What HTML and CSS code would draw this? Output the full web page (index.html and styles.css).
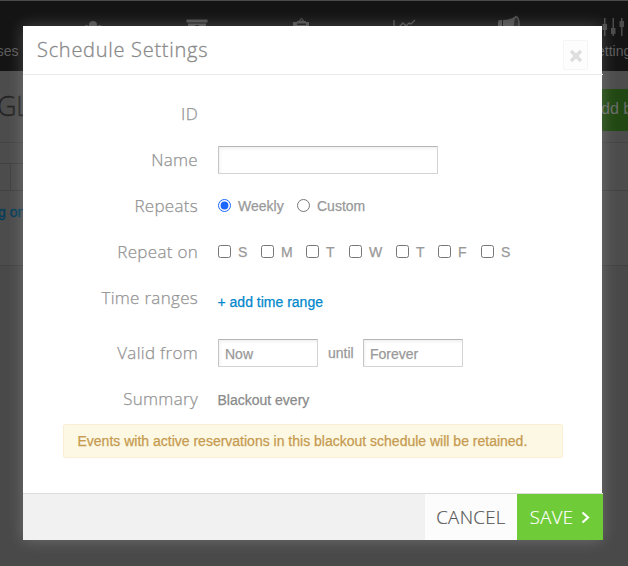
FILE: index.html
```html
<!DOCTYPE html>
<html lang="en">
<head>
<meta charset="utf-8">
<title>Schedule Settings</title>
<link rel="stylesheet" href="styles.css">
</head>
<body>
<div class="page">
  <nav class="nav">
    <div class="nav-item first"><span class="nav-icon"></span>Courses</div>
    <div class="nav-item"><svg class="nav-icon" viewBox="0 0 24 24"><circle cx="12" cy="8" r="4"/><circle cx="5.500" cy="10.500" r="2.500"/><circle cx="18.500" cy="10.500" r="2.500"/><path d="M6 20v-6q6-5 12 0v6z"/></svg></div>
    <div class="nav-item"><svg class="nav-icon" viewBox="0 0 24 24"><path d="M1.500 2.500h21v3h-21zM3 6.500h18v14H3z"/><path class="cut" d="M10 8h4v2h-4z"/></svg></div>
    <div class="nav-item"><svg class="nav-icon" viewBox="0 0 24 24"><path d="M4 5h4v3h9V5h3v17H4z"/><path d="M8 6.500V4h2q2.500-6 5 0h2v2.500z"/><circle class="cut" cx="12.500" cy="3" r="1"/></svg></div>
    <div class="nav-item"><svg class="nav-icon line" viewBox="0 0 24 24"><path d="M1 3v18h22M5 11l5-5 3 3 3-3 2 1 4-4"/></svg></div>
    <div class="nav-item"><svg class="nav-icon" viewBox="0 0 24 24"><path d="M1 5q0-2 2-2h2v10H3q-2 0-2-2zM6 3q7 0 13-4v17q-6-4-13-4z"/><path class="horn" d="M19-.5q3 1 3 8t-3 8q-3-3-3-8t3-8z"/></svg></div>
    <div class="nav-item"><svg class="nav-icon" viewBox="0 0 24 24"><path d="M3 1h1.500v18H3zM11.500 1H13v18h-1.500zM20 1h1.500v18H20zM1.500 7h4.500v6H1.500zM10 11h4.500v6H10zM18.500 4H23v6h-4.500z"/></svg>Settings</div>
  </nav>
  <header class="page-head"><div class="page-title">GL</div><div class="add">dd b</div></header>
  <div class="tabs"><span class="tab"></span><span class="tab-rest"></span></div>
  <div class="page-body"><div class="page-link">g on</div></div>
</div>

<section class="modal">
  <header class="modal-head">
    <h1>Schedule Settings</h1>
    <button class="close" type="button" aria-label="Close"><svg width="14" height="14" viewBox="0 0 14 14"><path d="M2 2l10 10M12 2L2 12"/></svg></button>
  </header>
  <div class="form">
    <div class="row"><div class="label">ID</div></div>
    <div class="row"><div class="label">Name</div><input class="input wide" type="text"></div>
    <div class="row"><div class="label">Repeats</div>
      <div class="field radios"><label><input type="radio" name="r" checked>Weekly</label><label><input type="radio" name="r">Custom</label></div></div>
    <div class="row"><div class="label">Repeat on</div>
      <div class="field days"><label><input type="checkbox">S</label><label><input type="checkbox">M</label><label><input type="checkbox">T</label><label><input type="checkbox">W</label><label><input type="checkbox">T</label><label><input type="checkbox">F</label><label><input type="checkbox">S</label></div></div>
    <div class="row tall"><div class="label">Time ranges</div><a class="add-range">+ add time range</a></div>
    <div class="row"><div class="label">Valid from</div>
      <div class="field"><input class="input" type="text" value="Now"><span class="until">until</span><input class="input" type="text" value="Forever"></div></div>
    <div class="row"><div class="label">Summary</div><div class="summary">Blackout every</div></div>
    <div class="alert">Events with active reservations in this blackout schedule will be retained.</div>
  </div>
  <footer class="modal-foot">
    <button class="btn cancel" type="button">CANCEL</button>
    <button class="btn save" type="button">SAVE<svg width="9" height="13" viewBox="0 0 9 13"><path d="M1.500 1.500l5.500 5-5.500 5"/></svg></button>
  </footer>
</section>
</body>
</html>
```
FILE: styles.css
```css
* { box-sizing: border-box; }
body { margin: 0; width: 628px; height: 566px; overflow: hidden; background: #494949; font: 14px/20px "Liberation Sans", Arial, sans-serif; color: #999; }
.page { height: 566px; overflow: hidden; }
.nav { display: flex; height: 71px; margin-left: -63px; width: 740px; background: #141414; border-top: 1px solid #4a4a4a; color: #5c5c5c; }
.nav-item { flex: 0 0 104px; display: flex; flex-direction: column; align-items: center; padding-top: 16px; }
.nav-item.first { padding-left: 7px; }
.nav-icon { width: 24px; height: 24px; fill: #4b4b4b; overflow: visible; flex: none; }
.nav-icon .cut { fill: #202020; }
.nav-icon.line { fill: none; stroke: #4b4b4b; stroke-width: 1.4; }
.nav-icon .horn { fill: #222; stroke: #4b4b4b; stroke-width: 1.5; }
.page-head { display: flex; justify-content: space-between; height: 72px; background: #4c4c4c; border-bottom: 1px solid #444; }
.page-title { margin: 18px 0 0 -3px; font: 300 27px/34px "Open Sans", sans-serif; color: #222; letter-spacing: -.5px; -webkit-text-stroke: .3px; }
.add { margin-top: 18px; width: 36px; height: 42px; padding-left: 10px; background: #214712; color: #6a6a6a; font-size: 16px; line-height: 40px; white-space: nowrap; }
.add { width: 36px; padding-left: 9px; }
.tabs { display: flex; height: 48px; padding-top: 20px; background: #4c4c4c; border-bottom: 1px solid #414141; }
.tab { width: 11px; height: 28px; border-right: 1px solid #414141; border-top: 1px solid #414141; }
.tab-rest { width: 20px; border-top: 1px solid #414141; }
.page-body { height: 75px; padding-top: 11px; background: #4c4c4c; border-bottom: 1px solid #414141; color: #003d5c; }
.page-link { margin-left: -2px; -webkit-text-stroke: .3px; }

.modal { position: absolute; left: 23px; top: 26px; width: 579px; height: 514px; display: flex; flex-direction: column; background: #fff; box-shadow: 0 0 15px rgba(255,255,255,.22); }
.modal-head { display: flex; justify-content: space-between; height: 49px; width: 580px; padding: 9px 15px 0 14px; border-bottom: 1px solid #ebebeb; }
h1 { margin: 1px 0 0; font: 300 20px/28px "Open Sans", sans-serif; color: #888; letter-spacing: .72px; -webkit-text-stroke: .3px; }
.close { width: 25px; height: 30px; margin-top: 5px; padding: 2px 0 0; display: flex; align-items: center; justify-content: center; border: 1px solid #f5f5f5; border-radius: 2px; background: #fdfdfd; }
.close svg { stroke: #dedede; stroke-width: 3.5; fill: none; flex: none; }
.form { flex: 1; padding: 16px 39px 0 0; }
.row { display: flex; align-items: center; height: 46px; }
.row.tall { height: 55px; align-items: flex-start; }
.label { width: 175px; margin-right: 20px; flex: none; text-align: right; font: 300 17px/24px "Open Sans", sans-serif; color: #939393; letter-spacing: .3px; -webkit-text-stroke: .25px; white-space: nowrap; }
.tall .label { margin-top: 11px; }
.field { display: flex; align-items: center; }
.input { width: 100px; height: 28px; padding: 3px 6px 1px; border: 1px solid #d4d4d4; border-top-color: #b5b5b5; border-left-color: #c4c4c4; border-radius: 1px; box-shadow: inset 1px 2px 3px rgba(0,0,0,.06); font: inherit; color: #999; -webkit-text-stroke: .25px; }
.input.wide { width: 220px; }
.until { margin: 0 10px; width: 25px; }
.field, .summary, .alert, .add-range { -webkit-text-stroke: .25px; white-space: nowrap; }
.field label { display: flex; align-items: center; }
input[type="radio"], input[type="checkbox"] { width: 13px; height: 13px; margin: 0 7px 0 0; flex: none; }
input[type="radio"] { accent-color: #1a66ff; }
.radios label { width: 79px; margin-top: -1px; }
.days { display: grid; grid-template-columns: 43px 45px 43px 47px 42px 43px 30px; }
.days input { margin-top: -1px; }
.add-range { margin-top: 17px; color: #08c; }
.summary { margin-top: 2px; color: #8a8a8a; }
.add-range, .summary { margin-left: -.5px; }
.alert { width: 500px; height: 34px; margin: 2px 0 0 40px; padding: 6px 13.5px; background: #fcf8e3; border: 1px solid #fbeed5; border-radius: 2px; color: #c69a50; }
.modal-foot { display: flex; justify-content: flex-end; width: 580px; height: 47px; background: #f1f1f1; border-top: 1px solid #dcdcdc; }
.btn { border: 0; padding: 0; font: 300 18.500px/46px "Open Sans", sans-serif; display: flex; align-items: center; justify-content: center; letter-spacing: .4px; -webkit-text-stroke: .2px; }
.cancel { width: 92px; background: #fcfcfc; color: #555; }
.save { width: 86px; background: #70cb39; color: #fff; gap: 8px; }
.save svg { fill: none; stroke: #fff; stroke-width: 2.2; }
```
